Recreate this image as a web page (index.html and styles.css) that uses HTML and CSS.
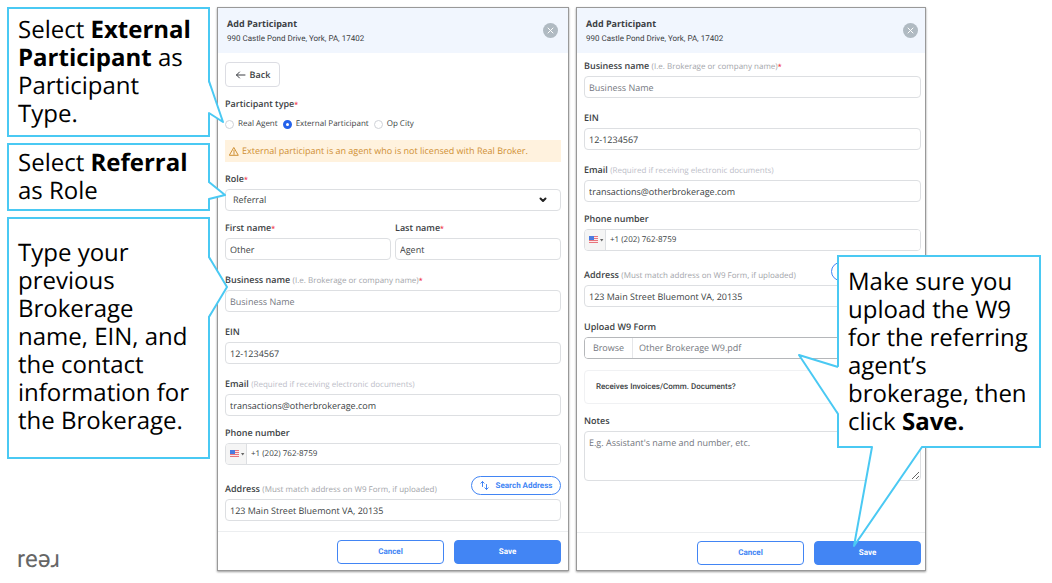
FILE: index.html
```
<!DOCTYPE html>
<html lang="en">

<head>
   <meta charset="utf-8" />
   <title>Add Participant - Referral</title>
   <meta name="viewport" content="width=device-width, initial-scale=1">
   <link rel="stylesheet" href="styles.css">
</head>

<body>
   <main class="slide">
      <aside class="steps">
         <div class="callout type-step">
            <p>Select <strong>External Participant</strong> as Participant Type.</p>
            <svg class="tail" width="18" height="46" viewBox="0 0 18 46" aria-hidden="true">
               <path class="fill" d="M0 2 L15 43 L0 34z" />
               <path class="line" d="M1 0 V2 L15 43 L1 34 V36" />
            </svg>
         </div>
         <div class="callout role-step">
            <p>Select <strong>Referral</strong> as Role</p>
            <svg class="tail" width="20" height="24" viewBox="0 0 20 24" aria-hidden="true">
               <path class="fill" d="M0 2 L17 15 L0 19z" />
               <path class="line" d="M1 0 V2 L17 15 L1 19 V21" />
            </svg>
         </div>
         <div class="callout info-step">
            <p>Type your previous Brokerage name, EIN, and the contact information for the Brokerage.</p>
            <svg class="tail" width="22" height="66" viewBox="0 0 22 66" aria-hidden="true">
               <path class="fill" d="M0 2 L19 32 L0 62z" />
               <path class="line" d="M1 0 V2 L19 32 L1 62 V64" />
            </svg>
         </div>
         <div class="logo">reəɹ</div>
      </aside>

      <form class="panel">
         <header class="panel-head">
            <div>
               <h2>Add Participant</h2>
               <p>990 Castle Pond Drive, York, PA, 17402</p>
            </div>
            <button type="button" class="close" aria-label="Close">
               <svg width="15" height="15" viewBox="0 0 15 15"><path d="M5 5l5 5M10 5l-5 5" /></svg>
            </button>
         </header>
         <div class="panel-body">
            <button type="button" class="back">
               <svg width="11" height="8" viewBox="0 0 11 8"><path d="M10 4H1.500M4.500 1L1.500 4l3 3" /></svg>
               Back
            </button>
            <fieldset class="types">
               <legend>Participant type<span class="req">*</span></legend>
               <div class="radios">
                  <label><input type="radio" name="ptype">Real Agent</label>
                  <label><input type="radio" name="ptype" checked>External Participant</label>
                  <label><input type="radio" name="ptype">Op City</label>
               </div>
            </fieldset>
            <div class="warning">
               <svg width="10" height="9" viewBox="0 0 10 9"><path d="M5 .8L9.300 8.300H.7zM5 3.300v2.500M5 6.500v.9" /></svg>
               External participant is an agent who is not licensed with Real Broker.
            </div>
            <div class="field">
               <label for="role">Role<span class="req">*</span></label>
               <div class="select">
                  <select id="role">
                     <option>Referral</option>
                  </select>
                  <svg width="8" height="6" viewBox="0 0 8 6"><path d="M1.500 1.500L4 4l2.500-2.500" /></svg>
               </div>
            </div>
            <div class="pair">
               <div class="field">
                  <label for="first">First name<span class="req">*</span></label>
                  <input id="first" type="text" value="Other">
               </div>
               <div class="field">
                  <label for="last">Last name<span class="req">*</span></label>
                  <input id="last" type="text" value="Agent">
               </div>
            </div>
            <div class="field roomy">
               <label for="business1">Business name <small>(I.e. Brokerage or company name)</small><span class="req">*</span></label>
               <input id="business1" type="text" placeholder="Business Name">
            </div>
            <div class="field roomy">
               <label for="ein1">EIN</label>
               <input id="ein1" type="text" value="12-1234567">
            </div>
            <div class="field roomy">
               <label for="email1">Email <small class="pale">(Required if receiving electronic documents)</small></label>
               <input id="email1" type="email" value="transactions@otherbrokerage.com">
            </div>
            <div class="field">
               <label for="phone1">Phone number</label>
               <div class="phone">
                  <button type="button" class="country" aria-label="United States">
                     <svg width="16" height="8" viewBox="0 0 16 8">
                        <path fill="#fbe9ea" d="M0 0h9v7H0z" />
                        <path fill="#e8747c" d="M0 0h9v1H0zM0 2h9v1H0zM0 4h9v1H0zM0 6h9v1H0z" />
                        <path fill="#4a7be0" d="M0 0h5v4H0z" />
                        <path fill="#666" d="M11 3h3.400L12.700 5.400z" />
                     </svg>
                  </button>
                  <input id="phone1" type="tel" value="+1 (202) 762-8759">
               </div>
            </div>
            <div class="field">
               <div class="label-row">
                  <label for="address1">Address <small>(Must match address on W9 Form, if uploaded)</small></label>
                  <button type="button" class="search">
                     <svg width="9" height="11" viewBox="0 0 9 11"><path d="M2.500 6.500V1.500M.8 3.200L2.500 1.500l1.700 1.700M6.500 4.500v5M4.800 7.800l1.700 1.700 1.700-1.700" /></svg>
                     Search Address
                  </button>
               </div>
               <input id="address1" type="text" value="123 Main Street Bluemont VA, 20135">
            </div>
         </div>
         <footer class="panel-foot">
            <button type="button" class="btn">Cancel</button>
            <button type="button" class="btn primary">Save</button>
         </footer>
      </form>

      <form class="panel second">
         <header class="panel-head">
            <div>
               <h2>Add Participant</h2>
               <p>990 Castle Pond Drive, York, PA, 17402</p>
            </div>
            <button type="button" class="close" aria-label="Close">
               <svg width="15" height="15" viewBox="0 0 15 15"><path d="M5 5l5 5M10 5l-5 5" /></svg>
            </button>
         </header>
         <div class="panel-body">
            <div class="field">
               <label for="business2">Business name <small>(I.e. Brokerage or company name)</small><span class="req">*</span></label>
               <input id="business2" type="text" placeholder="Business Name">
            </div>
            <div class="field roomy">
               <label for="ein2">EIN</label>
               <input id="ein2" type="text" value="12-1234567">
            </div>
            <div class="field roomy">
               <label for="email2">Email <small class="pale">(Required if receiving electronic documents)</small></label>
               <input id="email2" type="email" value="transactions@otherbrokerage.com">
            </div>
            <div class="field">
               <label for="phone2">Phone number</label>
               <div class="phone">
                  <button type="button" class="country" aria-label="United States">
                     <svg width="16" height="8" viewBox="0 0 16 8">
                        <path fill="#fbe9ea" d="M0 0h9v7H0z" />
                        <path fill="#e8747c" d="M0 0h9v1H0zM0 2h9v1H0zM0 4h9v1H0zM0 6h9v1H0z" />
                        <path fill="#4a7be0" d="M0 0h5v4H0z" />
                        <path fill="#666" d="M11 3h3.400L12.700 5.400z" />
                     </svg>
                  </button>
                  <input id="phone2" type="tel" value="+1 (202) 762-8759">
               </div>
            </div>
            <div class="field">
               <div class="label-row">
                  <label for="address2">Address <small>(Must match address on W9 Form, if uploaded)</small></label>
                  <button type="button" class="search" aria-label="Search Address"></button>
               </div>
               <input id="address2" type="text" value="123 Main Street Bluemont VA, 20135">
            </div>
            <div class="field roomy">
               <label for="w9">Upload W9 Form</label>
               <div class="upload">
                  <button type="button">Browse</button>
                  <input id="w9" type="text" value="Other Brokerage W9.pdf" readonly>
               </div>
            </div>
            <div class="receives">Receives Invoices/Comm. Documents?</div>
            <div class="field">
               <label for="notes">Notes</label>
               <textarea id="notes" placeholder="E.g. Assistant's name and number, etc."></textarea>
            </div>
         </div>
         <footer class="panel-foot">
            <button type="button" class="btn">Cancel</button>
            <button type="button" class="btn primary">Save</button>
         </footer>
      </form>

      <div class="callout save-step">
         <svg class="tail-left" width="42" height="64" viewBox="0 0 42 64" aria-hidden="true">
            <path class="fill" d="M42 14 L2 2 L42 61z" />
            <path class="line" d="M41 14 L2 2 L41 61" />
         </svg>
         <svg class="tail-down" width="74" height="102" viewBox="0 0 74 102" aria-hidden="true">
            <path class="fill" d="M21 0 L3 100 L71 0z" />
            <path class="line" d="M19 1 H21 L3 100 L71 1 H73" />
         </svg>
         <p>Make sure you upload the W9 for the referring agent’s brokerage, then click <strong>Save.</strong></p>
      </div>
   </main>
</body>

</html>
```
FILE: styles.css
```
* {
   box-sizing: border-box;
}

body {
   margin: 0;
   background: #fff;
   color: #3c3f44;
   font-family: "Open Sans", sans-serif;
   font-size: 9px;
   line-height: 12px;
   text-rendering: geometricPrecision;
}

h2,
p,
fieldset {
   margin: 0;
   padding: 0;
   border: 0;
}

button,
input,
select,
textarea {
   margin: 0;
   font: inherit;
   color: inherit;
   text-rendering: inherit;
}

button {
   padding: 0;
   background: #fff;
   cursor: pointer;
}

svg {
   fill: none;
   stroke-linecap: round;
   stroke-linejoin: round;
}

.slide {
   position: relative;
   display: grid;
   grid-template-columns: 203fr 352fr 350fr 119fr;
   column-gap: 7px;
   min-height: 100vh;
   padding: 7px 0 12px 7px;
}

/* callouts */
.steps {
   display: flex;
   flex-direction: column;
   gap: 6px;
}

.callout {
   position: relative;
   z-index: 1;
   border: 2px solid #4ac9f3;
   background: #fff;
   color: #000;
   font-size: 24px;
   line-height: 28px;
   padding: 7px 9px;
}

.role-step {
   padding: 4px 9px;
}

.info-step {
   padding: 20px 9px 22px;
}

.tail {
   position: absolute;
   left: 100%;
}

.fill {
   fill: #fff;
}

.line {
   stroke: #4ac9f3;
   stroke-width: 2;
   stroke-linecap: butt;
}

.type-step .tail {
   top: 70px;
}

.role-step .tail {
   top: 35px;
}

.info-step .tail {
   top: 36px;
}

.save-step {
   position: absolute;
   top: 255px;
   right: 11px;
   width: 204px;
   padding: 11px 9px 10px;
}

.tail-left {
   position: absolute;
   right: 100%;
   top: 96px;
}

.tail-down {
   position: absolute;
   left: 12px;
   top: 100%;
}

.logo {
   margin-top: auto;
   padding-left: 10px;
   color: #666;
   font-family: Roboto, "Noto Sans", sans-serif;
   font-size: 24px;
   line-height: 24px;
}

/* panels */
.panel {
   display: flex;
   flex-direction: column;
   min-width: 0;
   border: 1px solid #999;
   box-shadow: 0 1px 2px rgba(0, 0, 0, .4);
   background: #fff;
}

.panel-head {
   display: flex;
   justify-content: space-between;
   align-items: center;
   height: 45px;
   padding: 0 10px 0 9px;
   background: #f1f6fe;
}

.second .panel-head {
   padding-right: 7px;
}

.panel-head h2 {
   font-size: 9px;
   line-height: 15px;
   font-weight: 700;
}

.panel-head p {
   font-family: Roboto, sans-serif;
   font-size: 8px;
   line-height: 15px;
}

.close {
   display: flex;
   border: 0;
   border-radius: 50%;
   background: #b0bac2;
}

.close svg {
   stroke: #fff;
}

.panel-body {
   display: flex;
   flex: 1;
   flex-direction: column;
   gap: 11px;
   padding: 9px 7px;
}

.second .panel-body {
   padding: 7px 4px 9px 7px;
}

.back {
   display: flex;
   align-items: center;
   justify-content: center;
   gap: 4px;
   align-self: flex-start;
   width: 55px;
   height: 25px;
   border: 1px solid #dcdde3;
   border-radius: 4px;
   font-weight: 600;
}

.back svg {
   stroke: #3c3f44;
}

.types legend,
.field label {
   display: block;
   padding: 0;
   font-weight: 600;
}

.radios {
   display: flex;
   gap: 5px;
   margin: 8px 0 -1px;
   font-size: 8px;
}

.radios label {
   display: flex;
   align-items: center;
   gap: 4px;
}

.radios input {
   appearance: none;
   width: 9px;
   height: 9px;
   border: 1px solid #cfd2d8;
   border-radius: 50%;
}

.radios input:checked {
   border: 3px solid #2563eb;
}

.req {
   color: #f0384a;
   font-size: 7px;
   line-height: 1;
}

.warning {
   display: flex;
   align-items: center;
   gap: 3px;
   height: 22px;
   padding-left: 4px;
   background: #fff2de;
   color: #cf9034;
}

.warning svg {
   stroke: #cf9034;
}

.field {
   display: flex;
   flex-direction: column;
   gap: 4px;
   min-width: 0;
}

.roomy {
   margin-top: 3px;
}

.field small {
   color: #a3a5aa;
   font-size: 8px;
   font-weight: 400;
   line-height: 1;
}

.field small.pale {
   color: #bcbec8;
}

.field input,
.field select,
.field textarea {
   width: 100%;
   height: 22px;
   padding: 0 4px;
   border: 1px solid #dddfe2;
   border-radius: 4px;
   background: #fff;
   outline: 0;
}

.field ::placeholder {
   color: #74777e;
   opacity: 1;
}

.pair {
   display: grid;
   grid-template-columns: 1fr 1fr;
   gap: 4px;
}

.select {
   display: grid;
   align-items: center;
}

.select select,
.select svg {
   grid-area: 1 / 1;
}

.select select {
   appearance: none;
   padding-left: 7px;
}

.select svg {
   justify-self: end;
   margin-right: 14px;
   stroke: #222;
   stroke-width: 2;
}

.phone,
.upload {
   display: flex;
   height: 22px;
   border: 1px solid #dddfe2;
   border-radius: 4px;
   overflow: hidden;
}

.field .phone input,
.field .upload input {
   height: auto;
   border: 0;
   border-radius: 0;
}

.field .phone input {
   font-size: 8px;
}

.country {
   display: flex;
   align-items: center;
   width: 21px;
   flex-shrink: 0;
   padding-left: 4px;
   border: 0;
   border-right: 1px solid #dddfe2;
   background: #f5f5f5;
}

.upload {
   border-color: #b5b7ba;
   color: #74777e;
}

.upload button {
   width: 48px;
   border: 0;
   border-right: 1px solid #e5e6e9;
}

.field .upload input {
   flex: 1;
   padding-left: 6px;
}

.label-row {
   display: flex;
   justify-content: space-between;
   align-items: flex-end;
}

.search {
   display: flex;
   align-items: center;
   justify-content: center;
   gap: 7px;
   width: 90px;
   height: 19px;
   border: 1px solid #4285f4;
   border-radius: 10px;
   color: #4285f4;
   font-family: Roboto, sans-serif;
   font-size: 8px;
   font-weight: 700;
}

.search svg {
   stroke: #4285f4;
}

.receives {
   height: 34px;
   padding: 10px 11px;
   border: 1px solid #f0f1f3;
   border-radius: 4px;
   font-family: Roboto, sans-serif;
   font-weight: 500;
   font-size: 8px;
}

.field textarea {
   height: 50px;
   padding: 5px 4px;
   resize: vertical;
}

.panel-foot {
   display: flex;
   justify-content: flex-end;
   gap: 10px;
   padding: 8px 7px 6px;
   border-top: 1px solid #eceef0;
}

.second .panel-foot {
   padding: 8px 4px 5px;
}

.btn {
   width: 107px;
   height: 24px;
   border: 1px solid #4285f4;
   border-radius: 4px;
   color: #4285f4;
   font-family: Roboto, sans-serif;
   font-size: 8px;
   font-weight: 700;
}

.primary {
   background: #4285f4;
   color: #fff;
}
```
